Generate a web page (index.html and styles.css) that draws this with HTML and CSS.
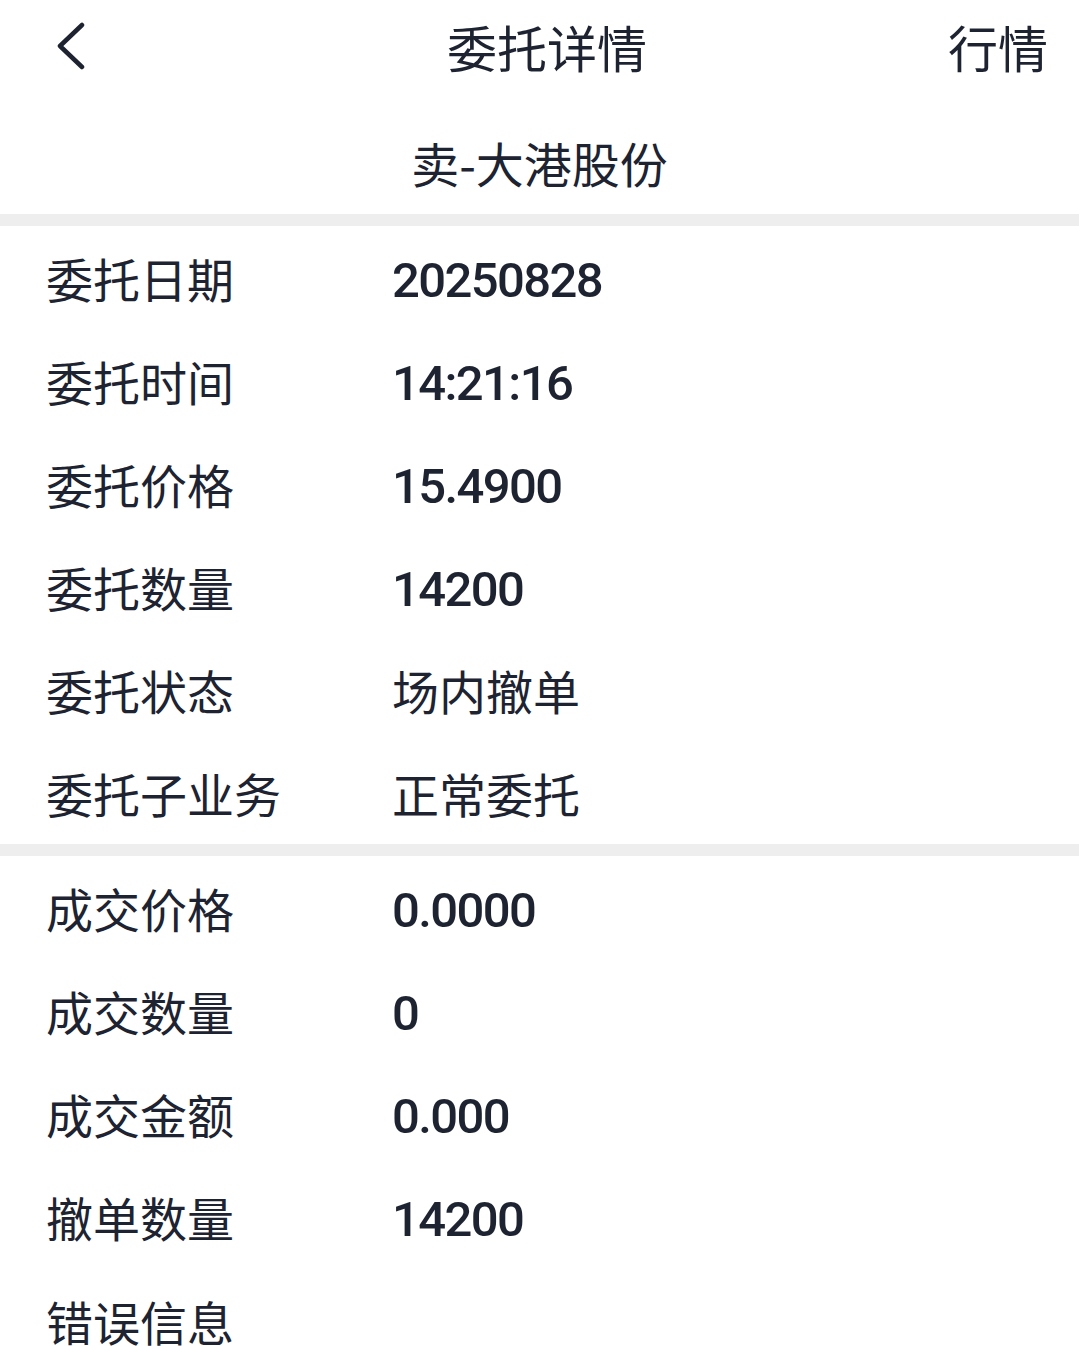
FILE: index.html
```html
<!DOCTYPE html>
<html lang="zh-CN">
<head>
    <meta charset="UTF-8">
    <meta name="viewport" content="width=device-width, initial-scale=1.0">
    <title>委托详情</title>
    <link rel="stylesheet" href="styles.css">
</head>
<body>
    <header class="nav-bar">
        <span class="nav-back">
            <svg width="36" height="48" viewBox="0 0 36 48">
                <path d="M30 3 L8 24 L30 45" fill="none" stroke="#1d2330" stroke-width="4.5" stroke-linecap="round" stroke-linejoin="round"/>
            </svg>
        </span>
        <h1 class="nav-title">委托详情</h1>
        <span class="nav-action">行情</span>
    </header>

    <div class="stock-name">卖-大港股份</div>

    <div class="divider"></div>

    <section class="detail-list">
        <div class="detail-row"><span class="label">委托日期</span><span class="value num">20250828</span></div>
        <div class="detail-row"><span class="label">委托时间</span><span class="value num">14:21:16</span></div>
        <div class="detail-row"><span class="label">委托价格</span><span class="value num">15.4900</span></div>
        <div class="detail-row"><span class="label">委托数量</span><span class="value num">14200</span></div>
        <div class="detail-row"><span class="label">委托状态</span><span class="value">场内撤单</span></div>
        <div class="detail-row"><span class="label">委托子业务</span><span class="value">正常委托</span></div>
    </section>

    <div class="divider"></div>

    <section class="detail-list">
        <div class="detail-row"><span class="label">成交价格</span><span class="value num">0.0000</span></div>
        <div class="detail-row"><span class="label">成交数量</span><span class="value num">0</span></div>
        <div class="detail-row"><span class="label">成交金额</span><span class="value num">0.000</span></div>
        <div class="detail-row"><span class="label">撤单数量</span><span class="value num">14200</span></div>
        <div class="detail-row last"><span class="label">错误信息</span><span class="value"></span></div>
    </section>
</body>
</html>
```

FILE: styles.css
```css
body {
    margin: 0;
    padding: 0;
    background-color: #fff;
    color: #1d2330;
    font-family: "Noto Sans CJK SC", "Noto Sans", sans-serif;
}
.nav-bar {
    height: 92px;
    display: flex;
    align-items: center;
    justify-content: space-between;
    padding: 0 31px 0 52px;
}
.nav-back {
    width: 114px;
    display: flex;
    align-items: center;
}
.nav-title {
    margin: 0;
    font-size: 50px;
    font-weight: 400;
    line-height: 60px;
}
.nav-action {
    width: 120px;
    text-align: right;
    font-size: 50px;
    line-height: 60px;
}
.stock-name {
    padding: 40px 0 22px;
    text-align: center;
    font-size: 48px;
    line-height: 60px;
}
.divider {
    height: 12px;
    background-color: #eeeeee;
}
.detail-row {
    height: 103px;
    display: flex;
    align-items: center;
    padding-left: 46px;
    font-size: 47px;
    line-height: 1;
}
.detail-row.last {
    height: auto;
    padding-top: 29px;
    padding-bottom: 2px;
}
.label {
    width: 346px;
}
.value.num {
    padding-top: 6px;
    font-family: Roboto, "Liberation Sans", sans-serif;
    font-size: 49px;
    letter-spacing: -1.6px;
    font-weight: 500;
}
```
